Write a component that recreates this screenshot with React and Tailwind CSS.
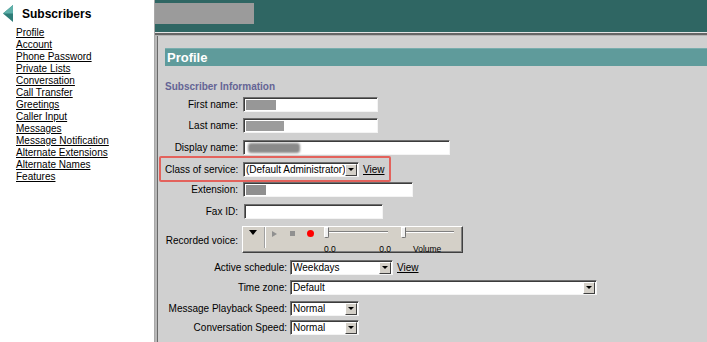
import React from 'react';

const links = [
  'Profile',
  'Account',
  'Phone Password',
  'Private Lists',
  'Conversation',
  'Call Transfer',
  'Greetings',
  'Caller Input',
  'Messages',
  'Message Notification',
  'Alternate Extensions',
  'Alternate Names',
  'Features',
];

const inset =
  'bg-white border border-t-[#6f6f6f] border-l-[#6f6f6f] border-b-[#f4f4f4] border-r-[#f4f4f4] shadow-[inset_1px_1px_0_#3c3c3c]';

function TextBox({ className, children }) {
  return <div className={`h-[15px] flex items-center pl-[2px] ${inset} ${className}`}>{children}</div>;
}

function DropButton() {
  return (
    <span className="w-[12px] h-[12px] mr-[1px] shrink-0 bg-[#d4d0c8] border border-t-white border-l-white border-b-[#404040] border-r-[#404040] flex items-center justify-center">
      <span className="w-0 h-0 border-l-[3px] border-r-[3px] border-t-[3px] border-l-transparent border-r-transparent border-t-black" />
    </span>
  );
}

function Select({ className, value }) {
  return (
    <div className={`h-[15px] flex items-center ${inset} ${className}`}>
      <span className="flex-1 pl-[2px] text-[10px] leading-none text-black whitespace-nowrap">{value}</span>
      <DropButton />
    </div>
  );
}

function Label({ className, children }) {
  return <div className={`shrink-0 text-right text-[10px] leading-none text-black whitespace-nowrap ${className}`}>{children}</div>;
}

function Blur({ className }) {
  return <span className={`block h-[10px] ${className}`} />;
}

function Slider({ className }) {
  return (
    <div className={`relative h-[13px] ${className}`}>
      <span className="absolute left-[4px] right-0 top-[4px] h-[2px] border-t border-t-[#808080] border-b border-b-white" />
      <span className="absolute left-0 top-0 w-[5px] h-[11px] bg-[#f0f0f0] border border-t-white border-l-white border-b-[#707070] border-r-[#707070] rounded-b-[2px]" />
    </div>
  );
}

function RecordedVoice() {
  return (
    <div className="w-[221px] h-[27px] bg-[#d4d0c8] border border-t-white border-l-white border-b-[#404040] border-r-[#404040] shadow-[inset_-1px_-1px_0_#808080] flex items-start">
      <span className="mt-[3px] ml-[6px] w-0 h-0 border-l-[4px] border-r-[4px] border-t-[5px] border-l-transparent border-r-transparent border-t-black" />
      <span className="ml-[7px] w-[2px] h-[21px] border-l border-l-[#a0a0a0] border-r border-r-white" />
      <span className="ml-[6px] mt-[4px] w-0 h-0 border-t-[3px] border-b-[3px] border-l-[5px] border-t-transparent border-b-transparent border-l-[#909090]" />
      <span className="ml-[13px] mt-[4px] w-[5px] h-[5px] bg-[#909090]" />
      <span className="ml-[12px] mt-[3px] w-[7px] h-[7px] rounded-full bg-[#ff0000]" />
      <div className="ml-[10px] flex flex-col">
        <Slider className="w-[64px]" />
        <div className="flex justify-between w-[67px] text-[8.5px] leading-none mt-[5px]">
          <span>0.0</span>
          <span>0.0</span>
        </div>
      </div>
      <div className="ml-[10px] flex flex-col">
        <Slider className="w-[53px]" />
        <span className="ml-[12px] text-[8.5px] leading-none mt-[5px]">Volume</span>
      </div>
    </div>
  );
}

function ViewLink() {
  return <span className="ml-[4px] text-[10px] leading-none underline text-black">View</span>;
}

export default function App() {
  return (
    <div className="w-[707px] h-[342px] flex overflow-hidden font-['Liberation_Sans',Arial,sans-serif] text-black">
      <div className="w-[154px] shrink-0 bg-white">
        <div className="flex items-center h-[27px] pl-[3px]">
          <svg width="10" height="17" viewBox="0 0 10 17">
            <polygon points="10,0 10,17 0,8.5" fill="#2f7d78" />
            <polygon points="10,0 10,8.5 0,8.5" fill="#5fb0aa" />
          </svg>
          <span className="ml-[9px] text-[12px] font-bold leading-none">Subscribers</span>
        </div>
        <div className="pl-[16px] flex flex-col">
          {links.map(l => (
            <span key={l} className="text-[10px] leading-[12px] underline">{l}</span>
          ))}
        </div>
      </div>
      <div className="w-[1px] shrink-0 bg-[#a8a8a8]" />
      <div className="flex-1 flex flex-col">
        <div className="h-[32px] bg-[#2f6663] pt-[3px]">
          <div className="w-[99px] h-[21px] bg-[#9b9b9b]" />
        </div>
        <div className="h-[1px] bg-[#e4e4e4]" />
        <div className="h-[2px] bg-[#666666]" />
        <div className="h-[1px] bg-[#b4b4b4]" />
        <div className="flex-1 flex bg-[#d0d0d0]">
          <div className="w-[2px] bg-[#b8b8b8]" />
          <div className="w-[1px] bg-[#6a6a6a]" />
          <div className="flex-1 pl-[7px] pt-[12px] flex flex-col">
            <div className="h-[18px] bg-[#5f9b9b] border-t border-t-[#79adad] flex items-center pl-[2px]">
              <span className="text-[13px] font-bold text-white leading-none">Profile</span>
            </div>
            <div className="mt-[15px] h-[12px] text-[10px] leading-[12px] font-bold text-[#646495]">Subscriber Information</div>

            <div className="mt-[4px] flex items-center">
              <Label className="w-[78px] pr-[5px]">First name:</Label>
              <TextBox className="w-[135px]"><Blur className="w-[30px] bg-[#979797]" /></TextBox>
            </div>
            <div className="mt-[6px] flex items-center">
              <Label className="w-[78px] pr-[5px]">Last name:</Label>
              <TextBox className="w-[135px]"><Blur className="w-[38px] bg-[#9c9c9c]" /></TextBox>
            </div>
            <div className="mt-[7px] flex items-center">
              <Label className="w-[78px] pr-[5px]">Display name:</Label>
              <TextBox className="w-[207px]"><Blur className="ml-[2px] w-[52px] h-[6px] bg-[#8a8a8a] rounded-[3px] blur-[1px]" /></TextBox>
            </div>
            <div className="relative mt-[7px] flex items-center">
              <span className="absolute -left-[6px] -top-[6px] w-[232px] h-[26px] border-2 border-[#e3625c] rounded-[2px]" />
              <Label className="w-[78px] pr-[5px]">Class of service:</Label>
              <Select className="w-[116px]" value="(Default Administrator)" />
              <ViewLink />
            </div>
            <div className="mt-[5px] flex items-center">
              <Label className="w-[78px] pr-[5px]">Extension:</Label>
              <TextBox className="w-[170px]"><Blur className="w-[20px] bg-[#8f8f8f]" /></TextBox>
            </div>
            <div className="mt-[7px] flex items-center">
              <Label className="w-[79px] pr-[6px]">Fax ID:</Label>
              <TextBox className="w-[139px]" />
            </div>
            <div className="mt-[7px] flex items-start">
              <Label className="w-[77px] pr-[4px] mt-[10px]">Recorded voice:</Label>
              <RecordedVoice />
            </div>

            <div className="mt-[7px] flex items-center">
              <Label className="w-[125px] pr-[3px]">Active schedule:</Label>
              <Select className="w-[103px]" value="Weekdays" />
              <ViewLink />
            </div>
            <div className="mt-[5px] flex items-center">
              <Label className="w-[125px] pr-[3px]">Time zone:</Label>
              <Select className="w-[307px]" value="Default" />
            </div>
            <div className="mt-[6px] flex items-center">
              <Label className="w-[125px] pr-[3px]">Message Playback Speed:</Label>
              <Select className="w-[69px]" value="Normal" />
            </div>
            <div className="mt-[4px] flex items-center">
              <Label className="w-[125px] pr-[3px]">Conversation Speed:</Label>
              <Select className="w-[69px]" value="Normal" />
            </div>
          </div>
        </div>
      </div>
    </div>
  );
}
